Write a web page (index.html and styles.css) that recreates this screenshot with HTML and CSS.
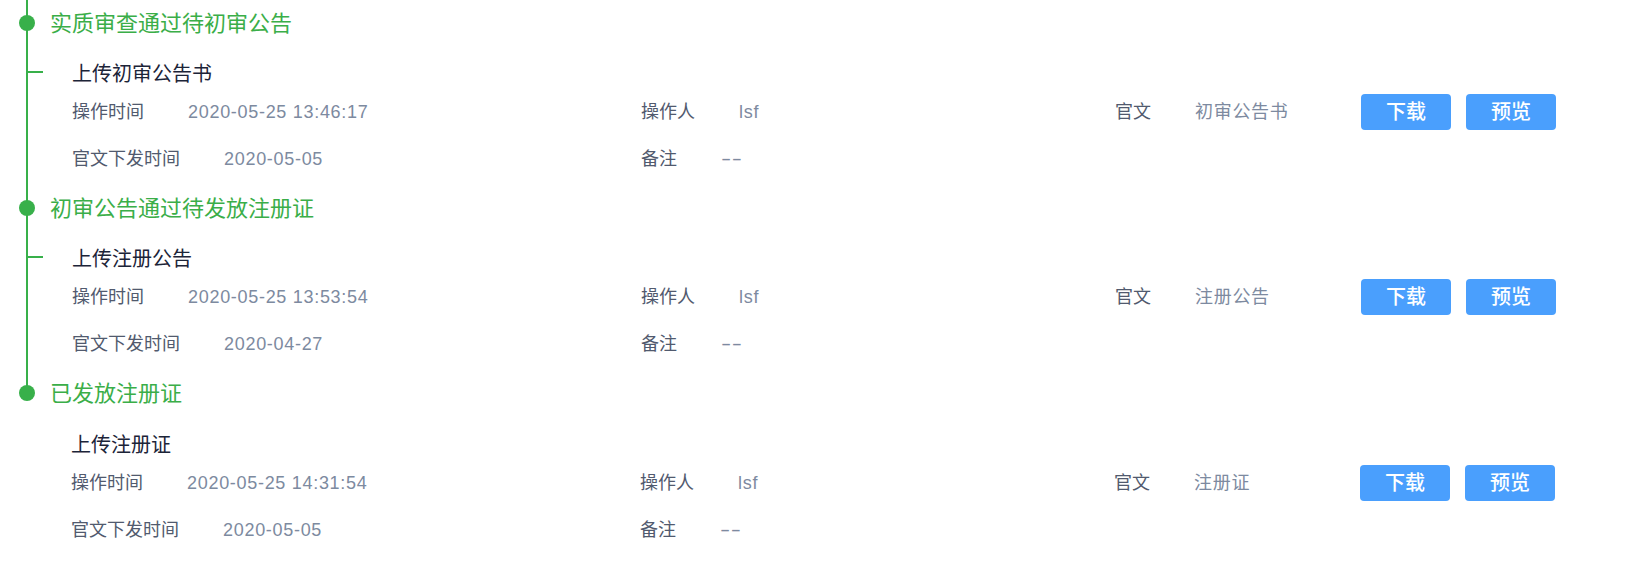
FILE: index.html
```html
<!DOCTYPE html>
<html lang="zh-CN">
<head>
<meta charset="utf-8">
<title>审查流程</title>
<link rel="stylesheet" href="styles.css">
</head>
<body>
<div class="timeline">
  <section class="node">
    <div class="node-head"><span class="dot"></span><h2 class="node-title">实质审查通过待初审公告</h2></div>
    <div class="node-body">
      <div class="step-title">上传初审公告书</div>
      <div class="info-grid">
        <div class="field"><span class="label">操作时间</span><span class="value">2020-05-25 13:46:17</span></div>
        <div class="field"><span class="label">操作人</span><span class="value">lsf</span></div>
        <div class="field field-doc">
          <div class="doc-info"><span class="label">官文</span><span class="value">初审公告书</span></div>
          <div class="actions"><button class="btn">下载</button><button class="btn">预览</button></div>
        </div>
        <div class="field"><span class="label">官文下发时间</span><span class="value">2020-05-05</span></div>
        <div class="field"><span class="label">备注</span><span class="value value-empty">--</span></div>
        <div class="field"></div>
      </div>
    </div>
  </section>
  <section class="node">
    <div class="node-head"><span class="dot"></span><h2 class="node-title">初审公告通过待发放注册证</h2></div>
    <div class="node-body">
      <div class="step-title">上传注册公告</div>
      <div class="info-grid">
        <div class="field"><span class="label">操作时间</span><span class="value">2020-05-25 13:53:54</span></div>
        <div class="field"><span class="label">操作人</span><span class="value">lsf</span></div>
        <div class="field field-doc">
          <div class="doc-info"><span class="label">官文</span><span class="value">注册公告</span></div>
          <div class="actions"><button class="btn">下载</button><button class="btn">预览</button></div>
        </div>
        <div class="field"><span class="label">官文下发时间</span><span class="value">2020-04-27</span></div>
        <div class="field"><span class="label">备注</span><span class="value value-empty">--</span></div>
        <div class="field"></div>
      </div>
    </div>
  </section>
  <section class="node node--last">
    <div class="node-head"><span class="dot"></span><h2 class="node-title">已发放注册证</h2></div>
    <div class="node-body">
      <div class="step-title">上传注册证</div>
      <div class="info-grid">
        <div class="field"><span class="label">操作时间</span><span class="value">2020-05-25 14:31:54</span></div>
        <div class="field"><span class="label">操作人</span><span class="value">lsf</span></div>
        <div class="field field-doc">
          <div class="doc-info"><span class="label">官文</span><span class="value">注册证</span></div>
          <div class="actions"><button class="btn">下载</button><button class="btn">预览</button></div>
        </div>
        <div class="field"><span class="label">官文下发时间</span><span class="value">2020-05-05</span></div>
        <div class="field"><span class="label">备注</span><span class="value value-empty">--</span></div>
        <div class="field"></div>
      </div>
    </div>
  </section>
</div>
</body>
</html>
```

FILE: styles.css
```css
html, body {
  margin: 0;
  padding: 0;
  background: #ffffff;
}

body {
  font-family: "Liberation Sans", "Noto Sans CJK SC", sans-serif;
  color: #515a6e;
}

.timeline {
  display: flex;
  flex-direction: column;
}

.node {
  position: relative;
  margin-left: 26px;
  border-left: 2px solid #38b04a;
  padding-top: 9px;
  padding-bottom: 8px;
}

.node--last {
  border-left-color: transparent;
}

.node--last::before {
  content: "";
  position: absolute;
  left: -2px;
  top: 0;
  width: 2px;
  height: 23px;
  background: #38b04a;
}

.node-head {
  position: relative;
  padding-left: 22px;
}

.dot {
  position: absolute;
  left: -9px;
  top: 6px;
  width: 16px;
  height: 16px;
  border-radius: 50%;
  background: #38b04a;
}

.node-title {
  margin: 0;
  font-size: 22px;
  line-height: 30px;
  font-weight: 400;
  color: #3aae48;
}

.node-body {
  padding-left: 44px;
  margin-top: 20px;
}

.node--last .node-body {
  padding-left: 43px;
  margin-top: 21px;
}

.step-title {
  position: relative;
  font-size: 20px;
  line-height: 30px;
  color: #1c2438;
}

.step-title::before {
  content: "";
  position: absolute;
  left: -44px;
  top: 12px;
  width: 15px;
  height: 2px;
  background: #38b04a;
}

.node--last .step-title::before {
  display: none;
}

.info-grid {
  display: grid;
  grid-template-columns: 569px 474px 1fr;
  grid-auto-rows: 36px;
  row-gap: 11px;
  margin-top: 5px;
}

.field {
  display: flex;
  align-items: center;
  font-size: 18px;
  line-height: 36px;
}

.label {
  color: #515a6e;
  margin-right: 44px;
  white-space: nowrap;
}

.value {
  color: #7d8aa0;
  letter-spacing: 0.7px;
  white-space: nowrap;
}

.value-empty {
  letter-spacing: 0.3px;
  display: inline-block;
  transform: scaleX(1.7);
  transform-origin: left center;
}

.doc-info {
  display: flex;
  align-items: center;
  width: 246px;
}

.actions {
  display: flex;
  gap: 15px;
}

.btn {
  width: 90px;
  height: 36px;
  border: none;
  border-radius: 4px;
  background: #4a9ffd;
  color: #ffffff;
  font-family: "Liberation Sans", "Noto Sans CJK SC", sans-serif;
  font-size: 20px;
  font-weight: 500;
  line-height: 36px;
  padding: 0;
  cursor: pointer;
}
```
